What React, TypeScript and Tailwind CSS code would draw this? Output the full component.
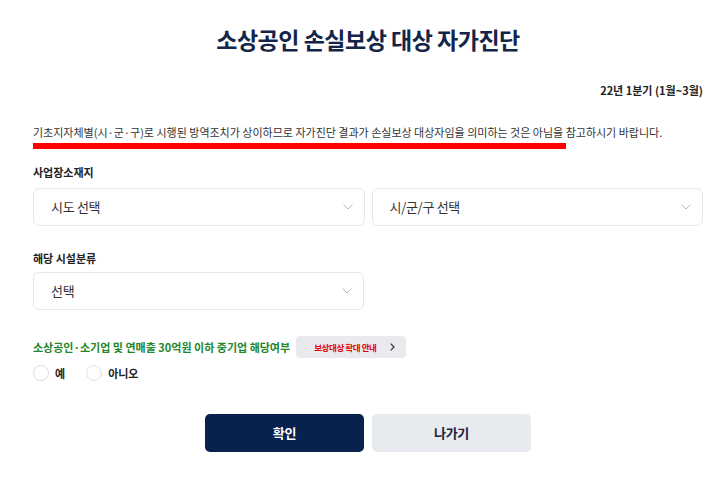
import React from "react";

function Chevron() {
  return (
    <svg width="10" height="6" viewBox="0 0 10 6" fill="none" className="shrink-0">
      <polyline points="0.5,0.5 5,5 9.5,0.5" stroke="#b4bac4" strokeWidth="1" />
    </svg>
  );
}

function Select({ label }: { label: string }) {
  return (
    <div className="flex h-[38px] flex-1 items-center justify-between rounded-[6px] border border-[#e3e7ee] bg-white pl-[17px] pr-[11px]">
      <span className="text-[13px] leading-[16px] tracking-[-0.3px] text-[#333]">{label}</span>
      <Chevron />
    </div>
  );
}

function Radio({ label }: { label: string }) {
  return (
    <div className="flex items-center gap-[6px]">
      <span className="h-[16px] w-[16px] rounded-full border border-[#dcdfe4] bg-white" />
      <span className="text-[11px] font-bold leading-[16px] text-[#222]">{label}</span>
    </div>
  );
}

export default function App() {
  return (
    <div
      className="h-[486px] w-[720px] overflow-hidden bg-white"
      style={{ fontFamily: '"Noto Sans CJK KR", "Noto Sans", sans-serif' }}
    >
      <div className="ml-[33px] flex w-[670px] flex-col pt-[23px]">
        <h1 className="text-center text-[23px] font-bold leading-[32px] tracking-[-0.5px] text-[#14254a]">
          소상공인 손실보상 대상 자가진단
        </h1>
        <div className="mt-[27px] text-right text-[11px] font-bold leading-[16px] text-[#222]">
          22년 1분기 (1월~3월)
        </div>
        <p className="mt-[26px] text-[11px] leading-[16px] text-[#333]">
          기초지자체별(시·군·구)로 시행된 방역조치가 상이하므로 자가진단 결과가 손실보상 대상자임을 의미하는 것은 아님을 참고하시기 바랍니다.
        </p>
        <div className="mt-[3px] h-[6px] w-[533px] bg-[#ff0000]" />

        <div className="mt-[15px] text-[11px] font-bold leading-[16px] text-[#222]">사업장소재지</div>
        <div className="mt-[8px] flex gap-[7px]">
          <Select label="시도 선택" />
          <Select label="시/군/구 선택" />
        </div>

        <div className="mt-[24px] text-[11px] font-bold leading-[16px] text-[#222]">해당 시설분류</div>
        <div className="mt-[6px] flex w-[331px]">
          <Select label="선택" />
        </div>

        <div className="mt-[26px] flex h-[22px] items-center gap-[6px]">
          <span className="text-[11px] font-bold leading-[16px] text-[#23862b]">
            소상공인·소기업 및 연매출 30억원 이하 중기업 해당여부
          </span>
          <button className="flex h-[22px] w-[110px] items-center justify-between rounded-[4px] bg-[#e8eaee] pl-[18px] pr-[11px]">
            <span className="text-[8.5px] font-bold leading-[12px] tracking-[-0.4px] text-[#e60000]">보상대상 확대 안내</span>
            <svg width="5" height="8" viewBox="0 0 5 8" fill="none">
              <polyline points="0.7,0.7 4,4 0.7,7.3" stroke="#333" strokeWidth="1.2" />
            </svg>
          </button>
        </div>

        <div className="mt-[7px] flex items-center gap-[21px]">
          <Radio label="예" />
          <Radio label="아니오" />
        </div>

        <div className="mt-[33px] flex justify-center gap-[8px]">
          <button className="h-[38px] w-[159px] rounded-[5px] bg-[#08224e] text-[13px] font-bold tracking-[-0.3px] text-white">
            확인
          </button>
          <button className="h-[38px] w-[159px] rounded-[5px] bg-[#e7eaee] text-[13px] font-bold tracking-[-0.3px] text-[#1a2540]">
            나가기
          </button>
        </div>
      </div>
    </div>
  );
}
